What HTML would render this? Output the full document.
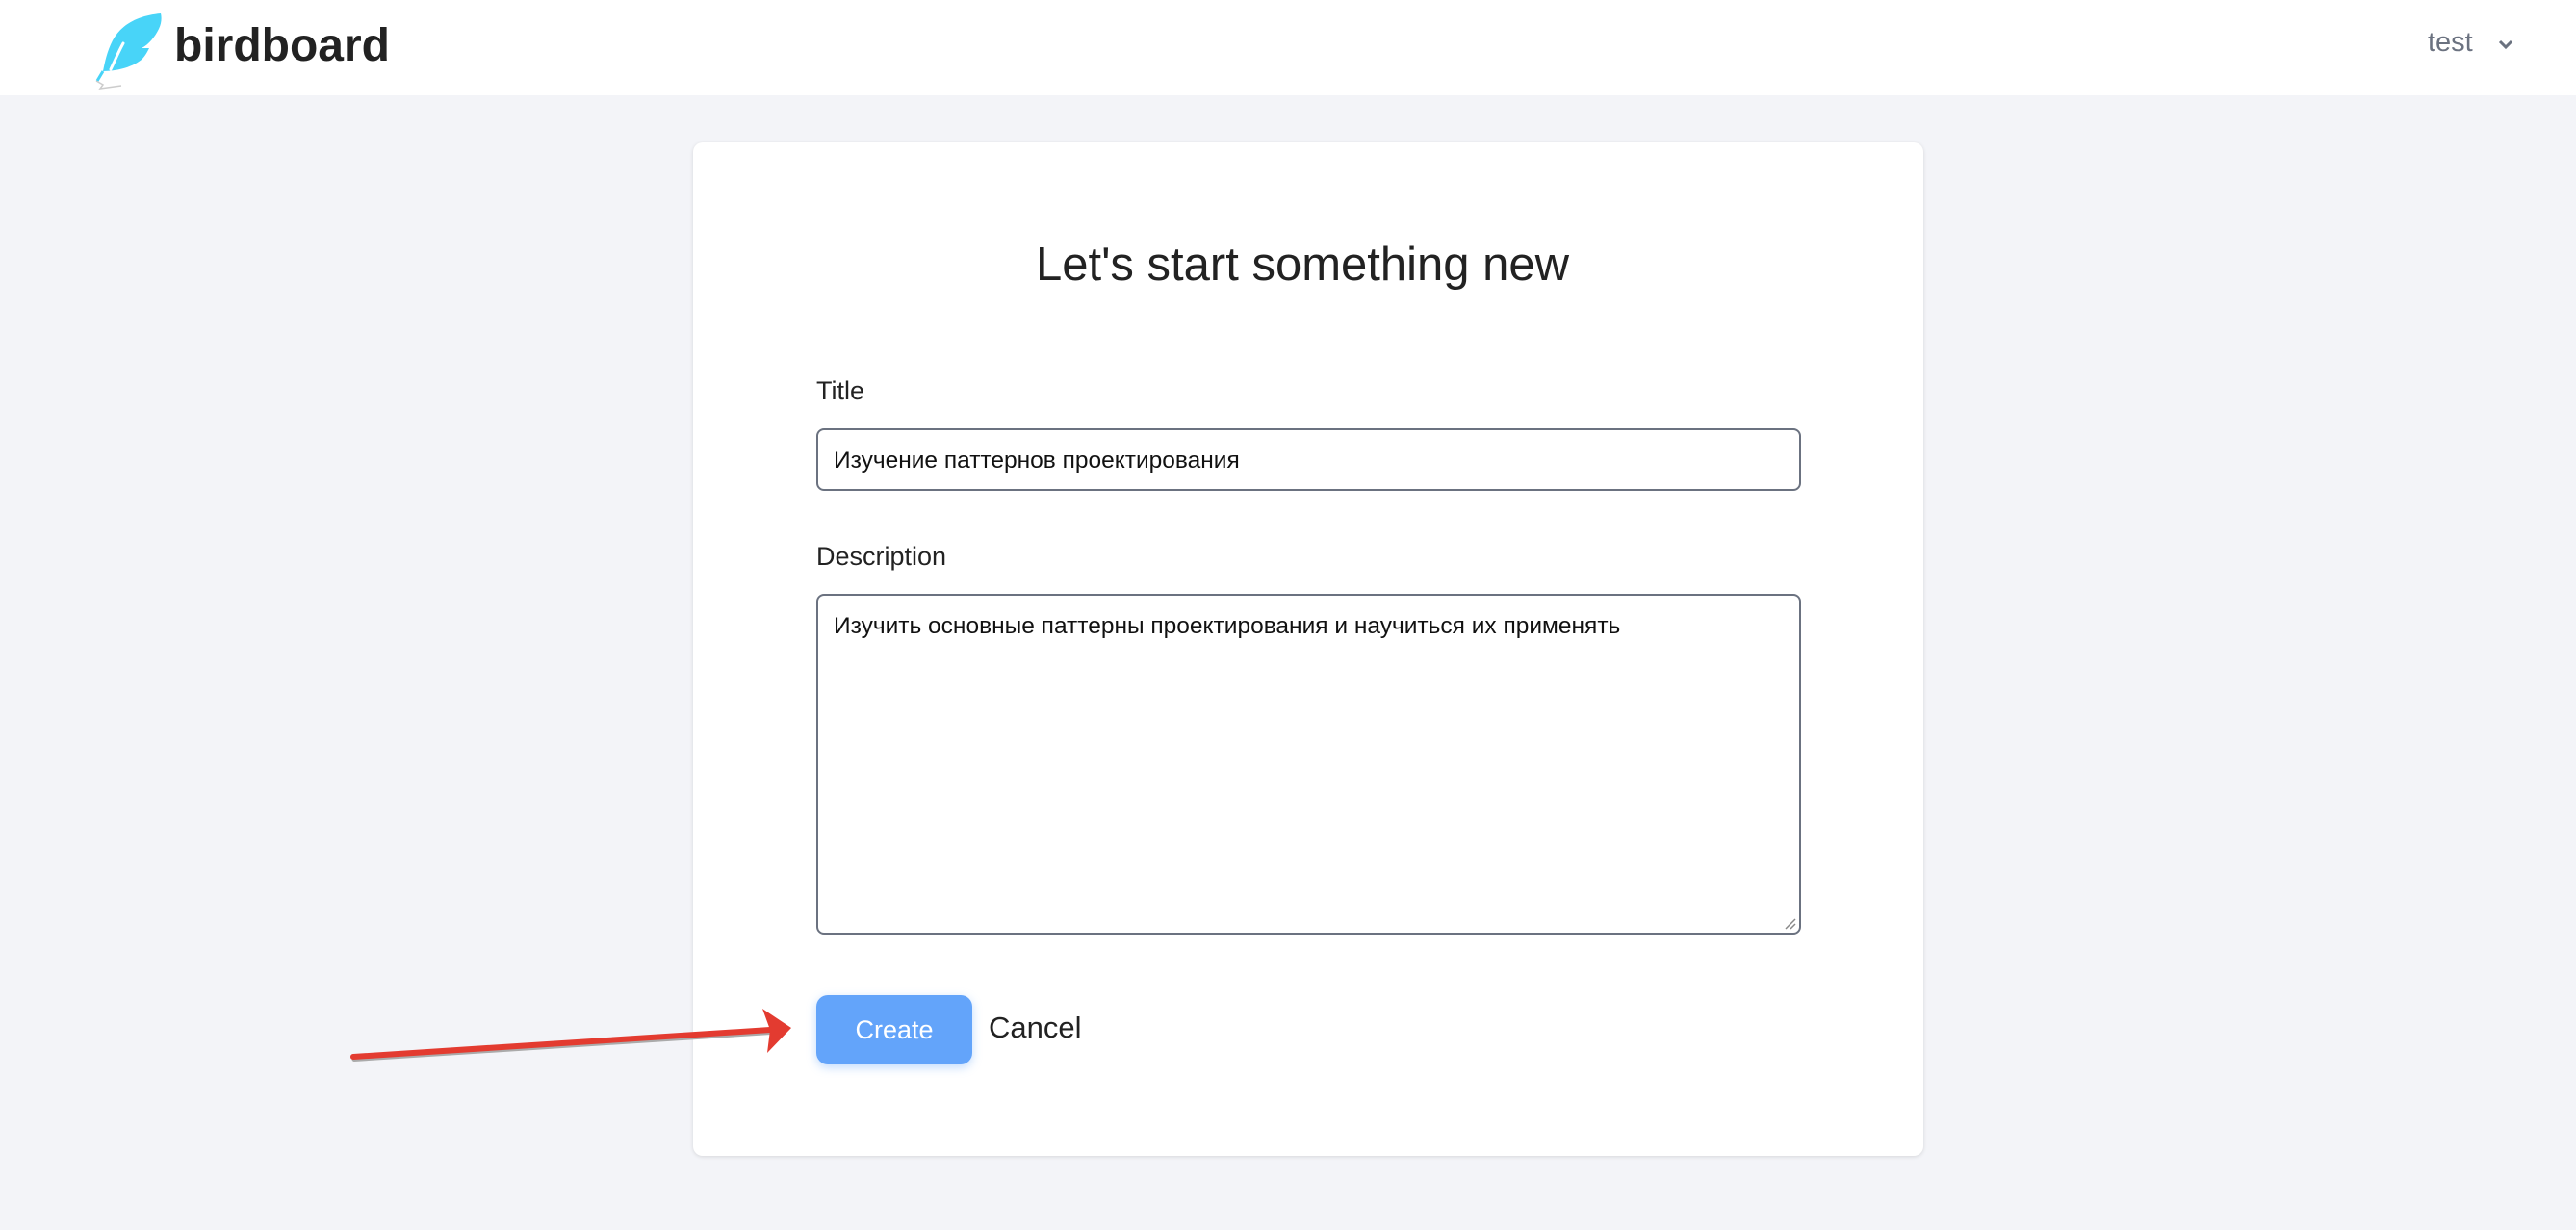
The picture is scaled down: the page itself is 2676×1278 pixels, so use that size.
<!DOCTYPE html>
<html><head><meta charset="utf-8"><style>
*{box-sizing:border-box;margin:0;padding:0}
body{width:2676px;height:1278px;background:#f3f4f8;font-family:"Liberation Sans","DejaVu Sans",sans-serif;color:#222;position:relative;overflow:hidden}
.hdr{position:absolute;left:0;top:0;width:2676px;height:99px;background:#fff}
.brand{position:absolute;left:181px;top:20px;font-size:48px;font-weight:bold;color:#222}
.user{position:absolute;left:2522px;top:28px;font-size:29px;color:#6b7280}
.card{position:absolute;left:720px;top:148px;width:1278px;height:1053px;background:#fff;border-radius:10px;box-shadow:0 1px 4px rgba(0,0,0,.12)}
h1{position:absolute;left:0;width:100%;top:247px;text-align:center;font-weight:normal;font-size:49px;color:#222;padding-left:30px}
.lbl{position:absolute;left:848px;font-size:27px;color:#222}
.box{position:absolute;left:848px;width:1023px;border:2px solid #6b7280;border-radius:8px;background:#fff;font-size:24.5px;padding-left:16px;color:#111}
.btn{position:absolute;left:848px;top:1034px;width:162px;height:72px;background:#63a4fa;border-radius:12px;color:#fff;font-size:27px;text-align:center;line-height:72px;box-shadow:0 3px 10px rgba(99,164,250,.4)}
.cancel{position:absolute;left:1027px;top:1050px;font-size:31px;color:#222}
</style></head><body>
<div class="hdr"></div>
<svg style="position:absolute;left:95px;top:12px" width="80" height="82" viewBox="0 0 80 82">
<path d="M72 2 C50 4 32 12 22 30 C16 42 14 52 12 62 C26 62 42 58 52 50 C56 46 58 42 60 38 C56 38 54 38 52 38 C60 34 66 26 70 18 C73 12 73 6 72 2 Z" fill="#48d4f8"/>
<path d="M12 62 L6 72" stroke="#48d4f8" stroke-width="3"/>
<path d="M33 33 C28 42 24 52 20 60" stroke="#fff" stroke-width="3" fill="none" stroke-linecap="round"/>
<path d="M5 72 L12 76 L9 80 L31 77" stroke="#ccc" stroke-width="1.5" fill="none"/>
</svg>
<div class="brand">birdboard</div>
<div class="user">test</div>
<svg style="position:absolute;left:2594px;top:40px" width="18" height="12" viewBox="0 0 18 12"><path d="M3 3 L9 9 L15 3" stroke="#6b7280" stroke-width="3" fill="none"/></svg>
<div class="card"></div>
<h1>Let's start something new</h1>
<div class="lbl" style="top:391px">Title</div>
<div class="box" style="top:445px;height:65px;line-height:63px">Изучение паттернов проектирования</div>
<div class="lbl" style="top:563px">Description</div>
<div class="box" style="top:617px;height:354px;padding-top:18px">Изучить основные паттерны проектирования и научиться их применять
<svg style="position:absolute;right:3px;bottom:3px" width="14" height="14"><path d="M13 3 L3 13 M13 8 L8 13" stroke="#888" stroke-width="1.5"/></svg></div>
<div class="btn">Create</div>
<div class="cancel">Cancel</div>
<svg style="position:absolute;left:360px;top:1040px" width="470" height="70" viewBox="0 0 470 70">
<path d="M7 59 L440 31" stroke="#aaa" stroke-width="5" stroke-linecap="round" transform="translate(1,1.5)"/>
<path d="M7 58 L440 30" stroke="#e33b30" stroke-width="6" stroke-linecap="round"/>
<path d="M432 8 L462 28 L437 54 L440 30 Z" fill="#e33b30"/>
</svg>
</body></html>
